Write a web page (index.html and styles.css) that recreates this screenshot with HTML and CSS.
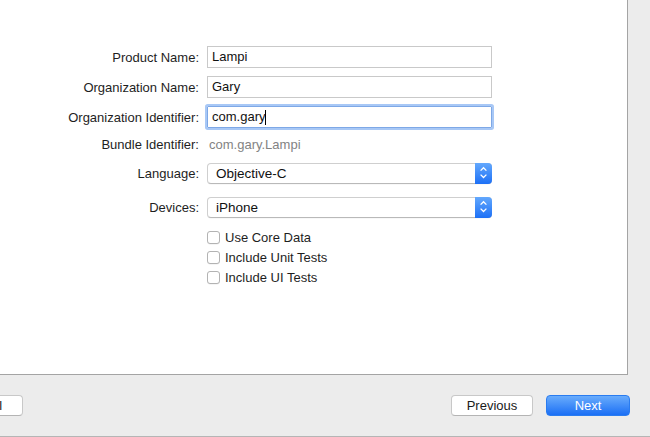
FILE: index.html
```html
<!DOCTYPE html>
<html>
<head>
<meta charset="utf-8">
<link rel="stylesheet" href="styles.css">
</head>
<body>
<div class="window">
  <div class="panel">
    <div class="form">
      <div class="row row-field">
        <label class="lbl">Product Name:</label>
        <div class="field">Lampi</div>
      </div>
      <div class="row row-field gap8">
        <label class="lbl">Organization Name:</label>
        <div class="field">Gary</div>
      </div>
      <div class="row row-field gap8">
        <label class="lbl">Organization Identifier:</label>
        <div class="field focused">com.gary<span class="caret"></span></div>
      </div>
      <div class="row row-text gap8">
        <label class="lbl">Bundle Identifier:</label>
        <div class="static">com.gary.Lampi</div>
      </div>
      <div class="row row-popup gap11">
        <label class="lbl">Language:</label>
        <div class="popup">
          <span class="popup-text">Objective-C</span>
          <span class="stepper"><svg width="17" height="21" viewBox="0 0 17 21"><path d="M5.6 7.6 L8.5 4.7 L11.4 7.6 M5.6 11.6 L8.5 14.5 L11.4 11.6" fill="none" stroke="#fff" stroke-width="1.3"/></svg></span>
        </div>
      </div>
      <div class="row row-popup gap13">
        <label class="lbl">Devices:</label>
        <div class="popup">
          <span class="popup-text">iPhone</span>
          <span class="stepper"><svg width="17" height="21" viewBox="0 0 17 21"><path d="M5.6 7.6 L8.5 4.7 L11.4 7.6 M5.6 11.6 L8.5 14.5 L11.4 11.6" fill="none" stroke="#fff" stroke-width="1.3"/></svg></span>
        </div>
      </div>
      <div class="checks">
        <div class="check"><span class="box"></span><span>Use Core Data</span></div>
        <div class="check"><span class="box"></span><span>Include Unit Tests</span></div>
        <div class="check"><span class="box"></span><span>Include UI Tests</span></div>
      </div>
    </div>
  </div>
  <div class="footer">
    <div class="btn cancel">Cancel</div>
    <div class="spacer"></div>
    <div class="btn">Previous</div>
    <div class="btn primary">Next</div>
  </div>
</div>
</body>
</html>
```

FILE: styles.css
```css
html, body {
  margin: 0;
  padding: 0;
  background: #ececec;
  font-family: "Liberation Sans", Arial, sans-serif;
  font-size: 13px;
  color: #1a1a1a;
  overflow: hidden;
}
.window {
  width: 650px;
  height: 436px;
  border-bottom: 1px solid #b5b5b5;
  display: flex;
  flex-direction: column;
}
.panel {
  width: 628px;
  height: 375px;
  background: #fff;
  border-right: 1px solid #a4a4a4;
  border-bottom: 1px solid #a4a4a4;
  padding-top: 46px;
  box-sizing: border-box;
}
.form {
  display: flex;
  flex-direction: column;
}
.row {
  display: flex;
  align-items: center;
  gap: 8px;
}
.gap8 { margin-top: 8px; }
.gap11 { margin-top: 11px; }
.gap13 { margin-top: 13px; }
.row-field { height: 22px; }
.row-text { height: 16px; }
.row-popup { height: 21px; }
.lbl {
  width: 199px;
  text-align: right;
  flex: none;
  color: #1e1e1e;
}
.field {
  width: 285px;
  height: 22px;
  box-sizing: border-box;
  border: 1px solid #c9c9c9;
  padding: 0 4px;
  line-height: 20px;
  display: flex;
  align-items: center;
  color: #111;
}
.field.focused {
  border-color: #7ea8e6;
  box-shadow: 0 0 0 2px #a8c8f6;
  border-radius: 1px;
}
.caret {
  display: inline-block;
  width: 1px;
  height: 15px;
  background: #000;
}
.static {
  color: #838383;
  padding-left: 2px;
}
.popup {
  width: 285px;
  height: 21px;
  box-sizing: border-box;
  border: 1px solid #cfcfcf;
  border-bottom-color: #b9b9b9;
  border-radius: 4px;
  display: flex;
  align-items: center;
  background: #fff;
  box-shadow: 0 0.5px 0.5px rgba(0,0,0,0.06);
}
.popup-text {
  flex: 1;
  padding-left: 8px;
  font-size: 13.5px;
  color: #111;
}
.stepper {
  width: 17px;
  height: 21px;
  margin: -1px -1px -1px 0;
  border-radius: 0 4px 4px 0;
  background: linear-gradient(#63a8fd, #1d70f6);
  display: flex;
}
.checks {
  margin-top: 9px;
  padding-left: 207px;
  display: flex;
  flex-direction: column;
}
.check {
  height: 20px;
  display: flex;
  align-items: center;
  gap: 5px;
  color: #1e1e1e;
}
.box {
  width: 13px;
  height: 13px;
  box-sizing: border-box;
  border: 1px solid #b3b3b3;
  border-radius: 3px;
  background: #fff;
  box-shadow: 0 0.5px 0.5px rgba(0,0,0,0.08);
}
.footer {
  display: flex;
  align-items: flex-start;
  padding-top: 20px;
  padding-right: 20px;
  gap: 13px;
}
.spacer { flex: 1; }
.btn {
  height: 21px;
  box-sizing: border-box;
  width: 82px;
  border: 1px solid #c8c8c8;
  border-bottom-color: #b4b4b4;
  border-radius: 4px;
  background: #fff;
  display: flex;
  align-items: center;
  justify-content: center;
  color: #1a1a1a;
  font-size: 13px;
}
.cancel {
  margin-left: -59px;
}
.primary {
  width: 84px;
  border: 1px solid #2a7cf0;
  background: linear-gradient(#69acfc, #1b6ff5);
  color: #fff;
}
```
